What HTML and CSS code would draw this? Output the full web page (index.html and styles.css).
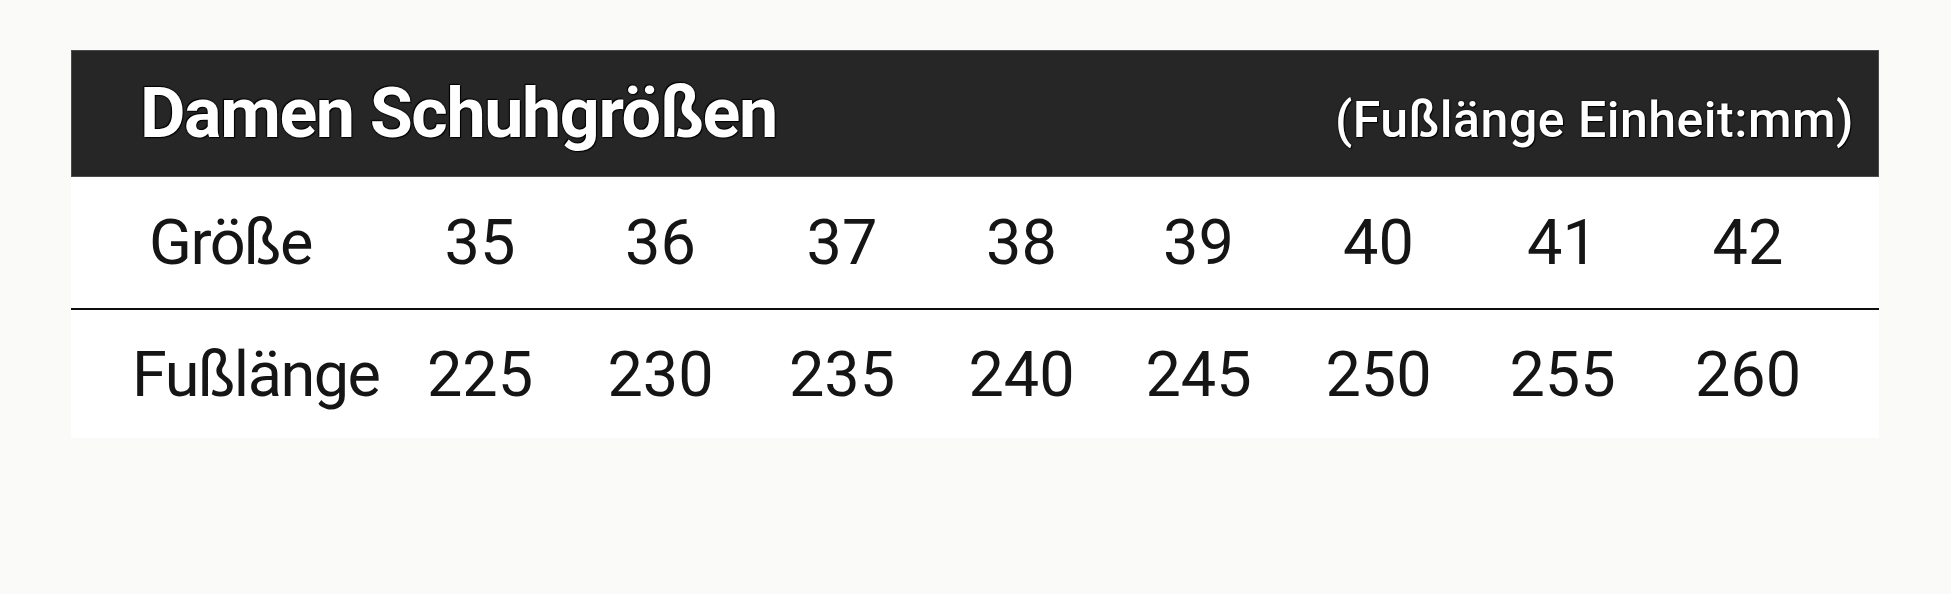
FILE: index.html
```html
<!DOCTYPE html>
<html lang="de">
<head>
<meta charset="utf-8">
<title>Damen Schuhgrößen</title>
<link rel="stylesheet" href="styles.css">
</head>
<body>
<div class="page">
  <div class="chart">
    <div class="head">
      <h1 class="title">Damen Schuhgrößen</h1>
      <span class="unit">(Fußlänge Einheit:mm)</span>
    </div>
    <div class="row row-size">
      <div class="label label-size">Größe</div>
      <div class="cell">35</div>
      <div class="cell">36</div>
      <div class="cell">37</div>
      <div class="cell">38</div>
      <div class="cell">39</div>
      <div class="cell">40</div>
      <div class="cell">41</div>
      <div class="cell">42</div>
    </div>
    <div class="row row-length">
      <div class="label label-length">Fußlänge</div>
      <div class="cell">225</div>
      <div class="cell">230</div>
      <div class="cell">235</div>
      <div class="cell">240</div>
      <div class="cell">245</div>
      <div class="cell">250</div>
      <div class="cell">255</div>
      <div class="cell">260</div>
    </div>
  </div>
</div>
</body>
</html>
```
FILE: styles.css
```css
html, body {
  margin: 0;
  padding: 0;
  background: #fafaf9;
}

.page {
  padding: 50px 72px 0 71px;
  font-family: Roboto, "Liberation Sans", Arial, sans-serif;
}

.chart {
  background: #ffffff;
}

.head {
  box-sizing: border-box;
  height: 127px;
  background: #262626;
  border: 1px solid #4c4c4c;
  display: flex;
  align-items: baseline;
  justify-content: space-between;
  padding: 27px 24px 0 68px;
}

.title {
  margin: 0;
  font-size: 70px;
  line-height: 70px;
  font-weight: 700;
  letter-spacing: -1.4px;
  color: #ffffff;
  text-shadow: 0 0 2px #000, 1px 1px 1px #000, -1px -1px 1px #000;
}

.unit {
  font-size: 50px;
  line-height: 70px;
  font-weight: 500;
  letter-spacing: 0.5px;
  color: #ffffff;
  text-shadow: 0 0 2px #000, 1px 1px 1px #000;
}

.row {
  display: grid;
  grid-template-columns: 319px 180px 181px 182px 177px 177px 183px 185px 186px;
  align-items: center;
  color: #151515;
  font-size: 63px;
  line-height: 1;
}

.row-size {
  height: 131px;
  border-bottom: 2px solid #0e0e0e;
}

.row-length {
  height: 128px;
}

.label {
  letter-spacing: -1.5px;
}

.label-size {
  padding-left: 78px;
}

.label-length {
  padding-left: 61px;
}

.cell {
  text-align: center;
}
```
